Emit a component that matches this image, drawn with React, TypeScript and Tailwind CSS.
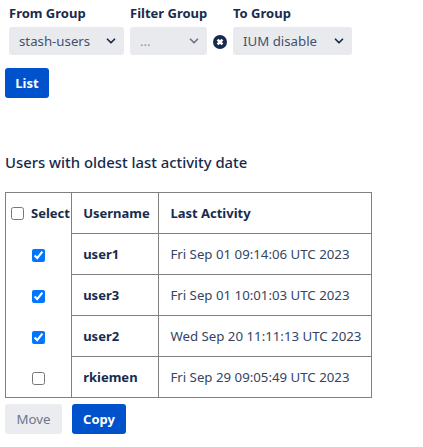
import { ChevronDown } from 'lucide-react';

const rows = [
  { name: 'user1', date: 'Fri Sep 01 09:14:06 UTC 2023', checked: true },
  { name: 'user3', date: 'Fri Sep 01 10:01:03 UTC 2023', checked: true },
  { name: 'user2', date: 'Wed Sep 20 11:11:13 UTC 2023', checked: true },
  { name: 'rkiemen', date: 'Fri Sep 29 09:05:49 UTC 2023', checked: false },
];

// Select look-alike, grey box with a chevron on the right
function GroupSelect({ value, muted, className }: { value: string; muted?: boolean; className: string }) {
  return (
    <div className={`flex h-[28px] items-center justify-between rounded-[3px] bg-[#e9eaee] pl-[10px] pr-[6px] ${className}`}>
      <span className={muted ? 'text-[#8d94a3]' : 'text-[#42526e]'}>{value}</span>
      <ChevronDown className={`h-[14px] w-[14px] ${muted ? 'text-[#6b778c]' : 'text-[#172b4d]'}`} strokeWidth={3} />
    </div>
  );
}

export default function App() {
  return (
    <div className="h-[447px] w-[423px] overflow-hidden bg-white pl-[5px] pt-[3px] font-['Noto_Sans','Open_Sans',sans-serif] text-[13.25px] leading-[20px] text-[#172b4d]">
      <div className="flex items-end pl-[4px]">
        <div className="mr-[6px] w-[115px]">
          <div className="mb-[4px] whitespace-nowrap text-[13px] font-bold">From Group</div>
          <GroupSelect value="stash-users" className="w-[115px]" />
        </div>
        <div className="mr-[6px] w-[77px]">
          <div className="mb-[4px] whitespace-nowrap text-[13px] font-bold">Filter Group</div>
          <GroupSelect value="..." muted className="w-[77px]" />
        </div>
        <div className="flex h-[28px] w-[20px] items-center pt-[2px]">
          <svg viewBox="0 0 14 14" className="h-[14px] w-[14px]">
            <circle cx="7" cy="7" r="7" fill="#172b4d" />
            <path d="M4.6 4.6l4.8 4.8M9.4 4.6l-4.8 4.8" stroke="#fff" strokeWidth="2.6" />
          </svg>
        </div>
        <div className="w-[119px]">
          <div className="mb-[4px] whitespace-nowrap text-[13px] font-bold">To Group</div>
          <GroupSelect value="IUM disable" className="w-[119px]" />
        </div>
      </div>

      <button className="mt-[13px] block h-[30px] w-[44px] rounded-[3px] bg-[#0052cc] text-[13px] font-bold text-white">List</button>

      <h2 className="mt-[54px] text-[14.85px] font-medium leading-[20px] text-[#172b4d]">Users with oldest last activity date</h2>

      <table className="mt-[20px] w-[367px] table-fixed border-collapse border border-[#808080] text-[13px]">
        <thead>
          <tr className="h-[41px]">
            <th className="w-[66px] whitespace-nowrap border-l border-[#808080] pl-[5px] text-left font-bold">
              <span className="flex items-center">
                <input type="checkbox" className="m-0 h-[13px] w-[13px]" readOnly />
                <span className="ml-[7px]">Select</span>
              </span>
            </th>
            <th className="w-[87px] border border-[#808080] pl-[11px] text-left font-bold">Username</th>
            <th className="w-[212px] border border-[#808080] pl-[11px] text-left font-bold">Last Activity</th>
          </tr>
        </thead>
        <tbody>
          {rows.map((row) => (
            <tr key={row.name} className="h-[41px]">
              <td className="text-center">
                <input type="checkbox" defaultChecked={row.checked} className="m-0 inline-block h-[13px] w-[13px] align-middle" />
              </td>
              <td className="border border-[#808080] pl-[11px] font-bold">{row.name}</td>
              <td className="border border-[#808080] pl-[11px] text-[13.25px] text-[#344563]">{row.date}</td>
            </tr>
          ))}
        </tbody>
      </table>

      <div className="mt-[6px] flex gap-[10px]">
        <button className="h-[30px] w-[57px] rounded-[3px] bg-[#ebecf0] text-[#6b778c]">Move</button>
        <button className="h-[30px] w-[54px] rounded-[3px] bg-[#0052cc] text-[13px] font-bold text-white">Copy</button>
      </div>
    </div>
  );
}
